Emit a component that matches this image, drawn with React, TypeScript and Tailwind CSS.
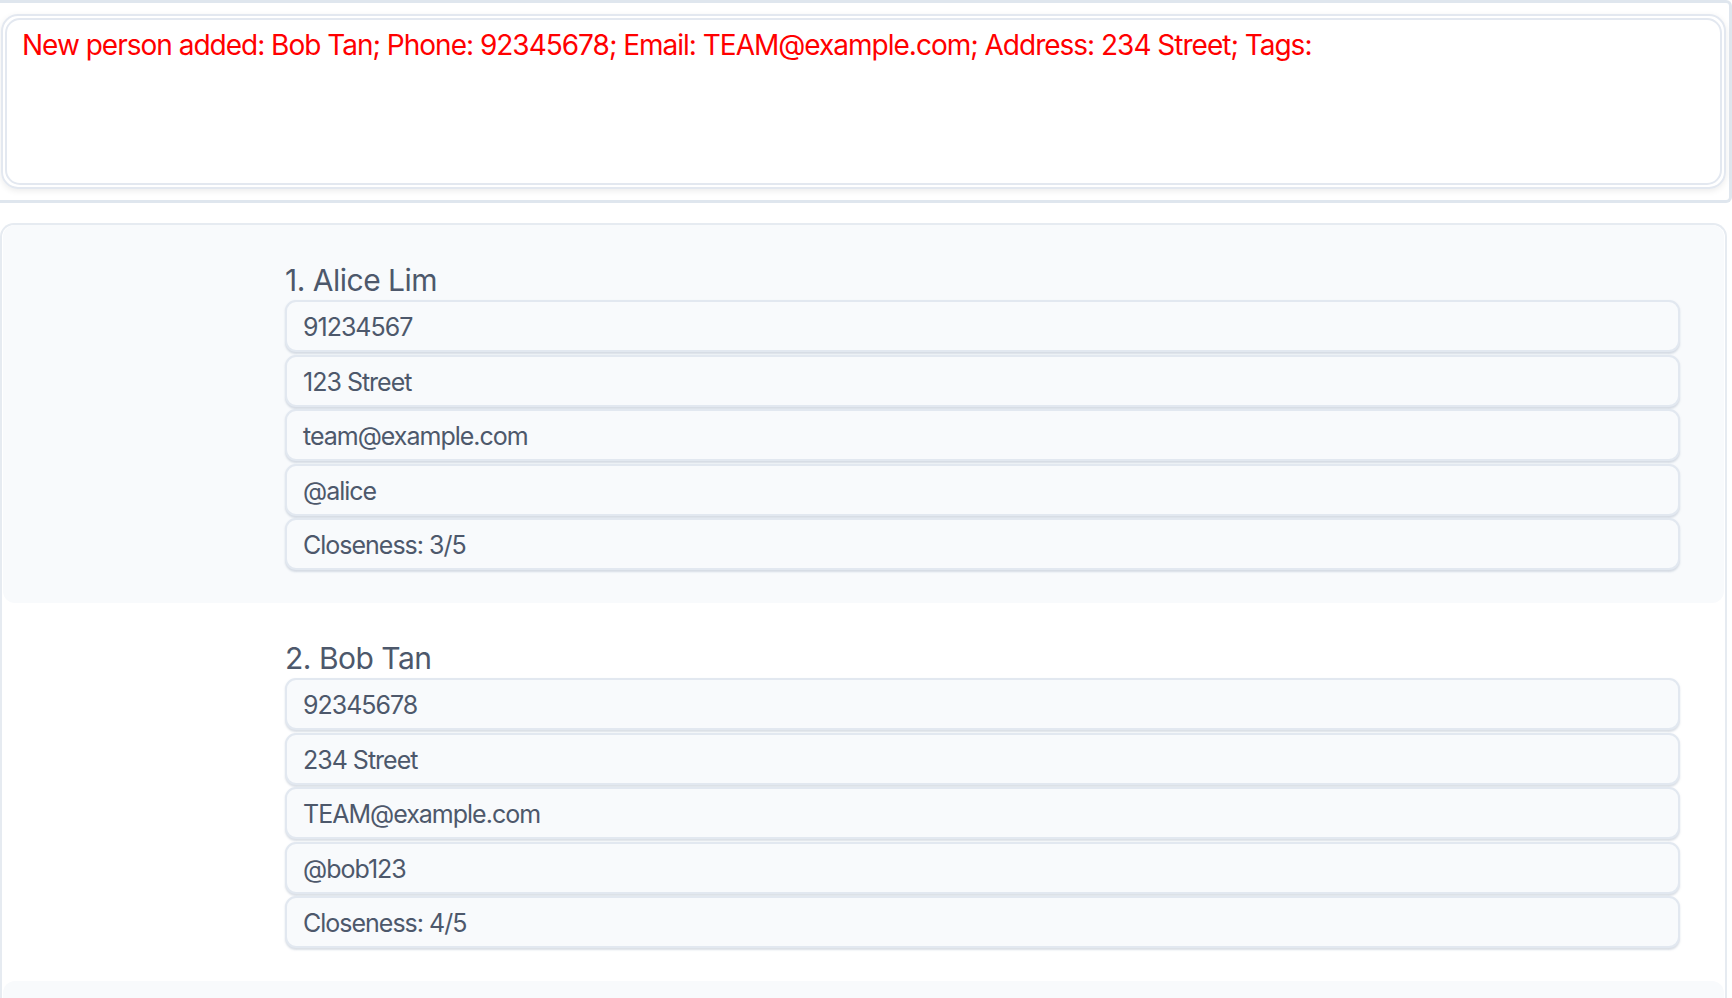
const people = [
  {
    name: "1. Alice Lim",
    fields: ["91234567", "123 Street", "team@example.com", "@alice", "Closeness: 3/5"],
  },
  {
    name: "2. Bob Tan",
    fields: ["92345678", "234 Street", "TEAM@example.com", "@bob123", "Closeness: 4/5"],
  },
];

const PersonCard = ({ name, fields, shaded }: { name: string; fields: string[]; shaded: boolean }) => {
  return (
    <div
      className={`rounded-[12px] pb-[33px] pl-[282px] pr-[44px] pt-[37px] ${
        shaded ? "bg-[#f8fafc]" : "bg-white"
      }`}
    >
      <p className="mb-[2px] text-[30px] leading-[36px] tracking-[-0.5px] text-[#4d586b]">{name}</p>
      <div className="flex flex-col gap-[2.5px]">
        {fields.map((f) => (
          <div
            key={f}
            className="flex h-[52px] items-center rounded-[11px] border-2 border-[#e2e8f0] bg-[#f8fafc] px-4 pt-1 text-[25px] tracking-[-1px] text-[#4d586b] shadow-[0_1.5px_2px_rgba(148,163,184,0.35)]"
          >
            {f}
          </div>
        ))}
      </div>
    </div>
  );
};

export default function App() {
  return (
    <div className="h-screen overflow-hidden bg-white font-['Inter',sans-serif]">
      <div className="rounded-r-md border-y-[3px] border-r-[3px] border-[#dfe6ee] py-[11px] pl-px pr-[3px]">
        <div className="rounded-[17px] border-2 border-[#e3e8f0] p-[2px] shadow-[0_2px_6px_rgba(0,0,0,0.08)]">
          <div className="h-[167px] rounded-[15px] border-2 border-[#e3e8f0] bg-white px-[15px] py-[7px] text-[28px] leading-[36px] tracking-[-1px] text-[#ff0000]">
            New person added: Bob Tan; Phone: 92345678; Email: TEAM@example.com; Address: 234 Street; Tags:
          </div>
        </div>
      </div>

      <div className="mt-5 w-[1727px] rounded-t-[14px] border-x-2 border-t-2 border-[#e6ebf1] px-px">
        {people.map((p, i) => (
          <PersonCard key={p.name} name={p.name} fields={p.fields} shaded={i % 2 === 0} />
        ))}
        <div className="h-[378px] rounded-[12px] bg-[#f8fafc]" />
      </div>
    </div>
  );
}
